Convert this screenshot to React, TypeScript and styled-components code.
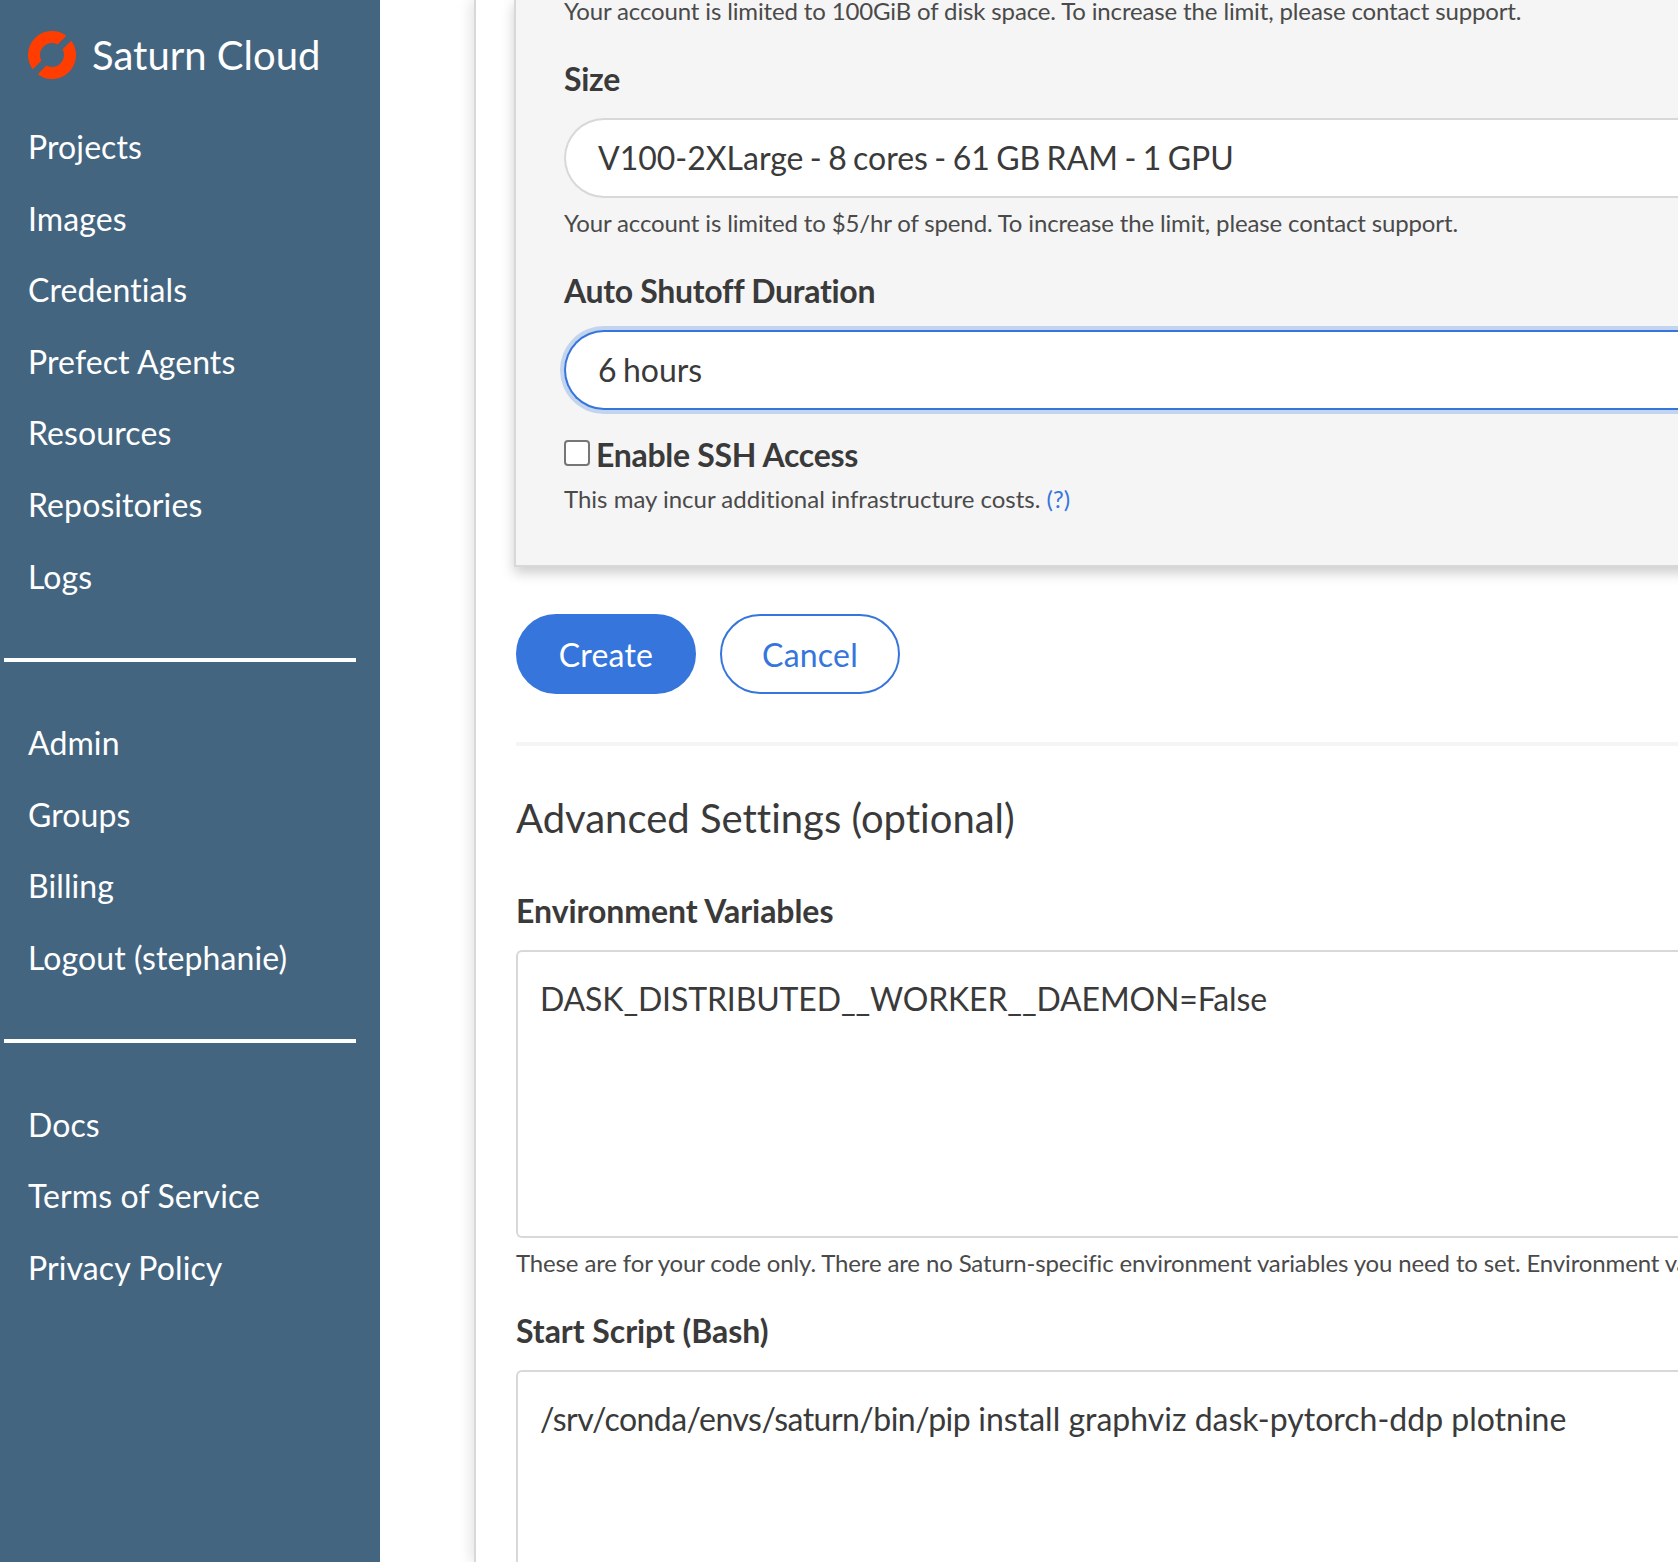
import React from 'react';
import styled, { createGlobalStyle } from 'styled-components';

const GlobalStyle = createGlobalStyle`
  html, body {
    margin: 0;
    padding: 0;
    background: #fff;
    overflow: hidden;
  }
  body {
    font-family: Lato, "Open Sans", sans-serif;
    font-variant-ligatures: none;
    color: #3a3a3a;
  }
`;

const Page = styled.div`
  display: flex;
  width: 1678px;
  height: 1562px;
  overflow: hidden;
`;

const Sidebar = styled.nav`
  flex: 0 0 380px;
  background: #44657f;
  padding-top: 28px;
  box-sizing: border-box;
`;

const Brand = styled.div`
  display: flex;
  align-items: center;
  gap: 16px;
  padding-left: 28px;
  height: 54px;
  margin-bottom: 29px;
  color: #fff;
  font-size: 40px;
`;

const NavGroup = styled.div`
  padding-left: 28px;
`;

const NavItem = styled.a`
  display: block;
  height: 71.6px;
  line-height: 71.6px;
  font-size: 32px;
  letter-spacing: 0.1px;
  color: #fff;
`;

const NavRule = styled.hr<{ $above: number; $below: number }>`
  width: 352px;
  height: 4px;
  margin: ${(p) => p.$above}px 0 ${(p) => p.$below}px 4px;
  border: 0;
  background: #fff;
`;

const Main = styled.main`
  flex: 0 0 auto;
  box-sizing: border-box;
  width: 1400px;
  margin-left: 94px;
  padding-left: 40px;
  border-left: 2px solid #d8d8d8;
  box-shadow: -4px 0 12px rgba(0, 0, 0, 0.1);
`;

const Panel = styled.section`
  margin: -2px 0 0 -2px;
  background: #f5f5f5;
  border: 2px solid #d8d8d8;
  border-top: 0;
  box-shadow: 0 6px 12px rgba(0, 0, 0, 0.2);
  padding: 0 0 53px 48px;
`;

const Help = styled.p<{ $top?: number; $loose?: boolean }>`
  margin: ${(p) => p.$top ?? 0}px 0 0;
  font-size: 24px;
  line-height: 26px;
  letter-spacing: ${(p) => (p.$loose ? '0' : '-0.14px')};
  white-space: nowrap;
  color: #4a4a4a;
`;

const Label = styled.label<{ $top?: number }>`
  display: block;
  margin-top: ${(p) => p.$top ?? 0}px;
  font-size: 32px;
  line-height: 40px;
  font-weight: 700;
  letter-spacing: -0.05px;
  color: #3a3a3a;
`;

const PanelLabel = styled(Label)`
  letter-spacing: -0.3px;
`;

const Select = styled.div<{ $focused?: boolean }>`
  box-sizing: border-box;
  height: 80px;
  margin-top: 19px;
  border-radius: 40px 0 0 40px;
  border: 2px solid ${(p) => (p.$focused ? '#3675dc' : '#d8d8d8')};
  border-right: 0;
  background: #fff;
  padding-left: 32px;
  line-height: 76px;
  font-size: 32px;
  word-spacing: -1.8px;
  box-shadow: ${(p) => (p.$focused ? '0 0 0 4px #c3d4ee' : 'none')};
`;

const CheckRow = styled.div`
  display: flex;
  align-items: center;
  gap: 6px;
  margin-top: 25px;
`;

const CheckBox = styled.input`
  appearance: none;
  width: 26px;
  height: 26px;
  margin: 0 0 4px;
  border: 2px solid #767676;
  border-radius: 4px;
  background: #fff;
`;

const HelpLink = styled.a`
  color: #3675dc;
`;

const Buttons = styled.div`
  display: flex;
  gap: 24px;
  margin-top: 47px;
`;

const Button = styled.button<{ $primary?: boolean }>`
  box-sizing: border-box;
  width: 180px;
  height: 80px;
  border-radius: 40px;
  border: 2px solid #3675dc;
  background: ${(p) => (p.$primary ? '#3675dc' : '#fff')};
  color: ${(p) => (p.$primary ? '#fff' : '#3675dc')};
  font-family: inherit;
  font-size: 32px;
  letter-spacing: 0.2px;
`;

const Rule = styled.hr`
  height: 4px;
  margin: 48px 0 0;
  border: 0;
  background: #f5f5f5;
`;

const Heading = styled.h2`
  margin: 48px 0 0;
  font-size: 40px;
  line-height: 48px;
  font-weight: 400;
  color: #3a3a3a;
`;

const TextBox = styled.div`
  box-sizing: border-box;
  height: 288px;
  margin-top: 19px;
  border: 2px solid #d8d8d8;
  border-right: 0;
  border-radius: 6px 0 0 6px;
  padding: 25px 22px;
  font-size: 32px;
  line-height: 44px;
`;

const DenseText = styled.span`
  letter-spacing: -0.14px;
`;

const PathText = styled.span`
  letter-spacing: -0.53px;
`;

const Logo = () => (
  <svg width="48" height="48" viewBox="0 0 48 48" aria-hidden="true">
    <path fill="#ff3d00" d="M38.32 4.74A24 24 0 0 0 4.74 38.32L13.41 29.65A12 12 0 0 1 29.65 13.41Z" />
    <path fill="#ff3d00" d="M43.26 9.68A24 24 0 0 1 9.68 43.26L18.35 34.59A12 12 0 0 0 34.59 18.35Z" />
  </svg>
);

const App = () => (
  <Page>
    <GlobalStyle />
    <Sidebar>
      <Brand>
        <Logo />
        Saturn Cloud
      </Brand>
      <NavGroup>
        <NavItem>Projects</NavItem>
        <NavItem>Images</NavItem>
        <NavItem>Credentials</NavItem>
        <NavItem>Prefect Agents</NavItem>
        <NavItem>Resources</NavItem>
        <NavItem>Repositories</NavItem>
        <NavItem>Logs</NavItem>
      </NavGroup>
      <NavRule $above={46} $below={45} />
      <NavGroup>
        <NavItem>Admin</NavItem>
        <NavItem>Groups</NavItem>
        <NavItem>Billing</NavItem>
        <NavItem>Logout (stephanie)</NavItem>
      </NavGroup>
      <NavRule $above={45} $below={46} />
      <NavGroup>
        <NavItem>Docs</NavItem>
        <NavItem>Terms of Service</NavItem>
        <NavItem>Privacy Policy</NavItem>
      </NavGroup>
    </Sidebar>
    <Main>
      <Panel>
        <Help>Your account is limited to 100GiB of disk space. To increase the limit, please contact support.</Help>
        <PanelLabel $top={35}>Size</PanelLabel>
        <Select>V100-2XLarge - 8 cores - 61 GB RAM - 1 GPU</Select>
        <Help $top={12}>Your account is limited to $5/hr of spend. To increase the limit, please contact support.</Help>
        <PanelLabel $top={35}>Auto Shutoff Duration</PanelLabel>
        <Select $focused>6 hours</Select>
        <CheckRow>
          <CheckBox type="checkbox" />
          <PanelLabel>Enable SSH Access</PanelLabel>
        </CheckRow>
        <Help $top={11} $loose>
          This may incur additional infrastructure costs. <HelpLink>(?)</HelpLink>
        </Help>
      </Panel>
      <Buttons>
        <Button $primary>Create</Button>
        <Button>Cancel</Button>
      </Buttons>
      <Rule />
      <Heading>Advanced Settings (optional)</Heading>
      <Label $top={49}>Environment Variables</Label>
      <TextBox>
        <DenseText>DASK_DISTRIBUTED__WORKER__DAEMON=False</DenseText>
      </TextBox>
      <Help $top={12}>These are for your code only. There are no Saturn-specific environment variables you need to set. Environment variables are available to all of your workspaces.</Help>
      <Label $top={35}>Start Script (Bash)</Label>
      <TextBox>
        <PathText>/srv/conda/envs/saturn/bin/pip</PathText> install graphviz dask-pytorch-ddp plotnine
      </TextBox>
    </Main>
  </Page>
);

export default App;
